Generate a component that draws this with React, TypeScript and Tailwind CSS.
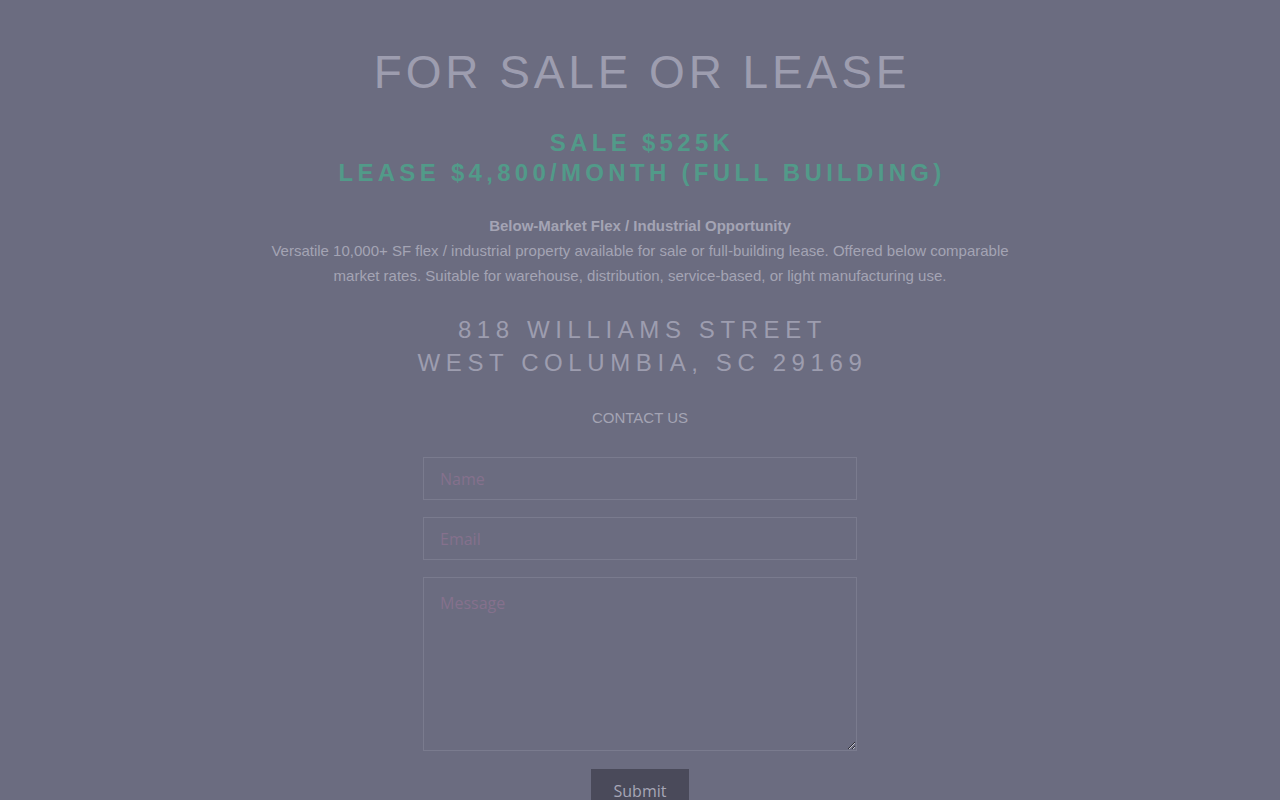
export default function App() {
  return (
    <div className="min-h-[800px] w-full bg-[#6b6c80] flex flex-col items-center pt-[45px] pb-10 font-['Liberation_Sans',Arial,sans-serif]">
      <h1 className="pl-[4px] text-[46px] leading-[55px] tracking-[3.9px] text-[#9d9daf] font-normal">FOR SALE OR LEASE</h1>

      <div className="mt-[28px] pl-[4px] flex flex-col items-center text-[24px] leading-[30px] font-bold tracking-[4.3px] text-[#529a89]">
        <div>SALE $525K</div>
        <div>LEASE $4,800/MONTH (FULL BUILDING)</div>
      </div>

      <div className="mt-[25px] max-w-[760px] text-center text-[15px] leading-[25px] text-[#a4a4b4]">
        <div className="font-bold">Below-Market Flex / Industrial Opportunity</div>
        <p>
          Versatile 10,000+ SF flex / industrial property available for sale or full-building lease. Offered below comparable
          market rates. Suitable for warehouse, distribution, service-based, or light manufacturing use.
        </p>
      </div>

      <div className="mt-[25px] pl-[5px] flex flex-col items-center text-[24px] leading-[33px] tracking-[5.6px] text-[#9d9daf]">
        <div>818 WILLIAMS STREET</div>
        <div>WEST COLUMBIA, SC 29169</div>
      </div>

      <div className="mt-[29px] text-[15px] leading-[20px] text-[#a4a4b4]">CONTACT US</div>

      <form className="mt-[29px] w-[434px] flex flex-col items-center gap-[17px] font-['Open_Sans','Noto_Sans',sans-serif]">
        <input
          type="text"
          placeholder="Name"
          className="w-full h-[43px] border border-[#7a7b8e] bg-transparent px-4 text-[16px] text-[#a4a4b4] placeholder:text-[#85718d] outline-none"
        />
        <input
          type="email"
          placeholder="Email"
          className="w-full h-[43px] border border-[#7a7b8e] bg-transparent px-4 text-[16px] text-[#a4a4b4] placeholder:text-[#85718d] outline-none"
        />
        <textarea
          placeholder="Message"
          className="w-full h-[174px] border border-[#7a7b8e] bg-transparent px-4 py-[13px] text-[16px] text-[#a4a4b4] placeholder:text-[#85718d] outline-none"
        />
        <button
          type="button"
          className="mt-[1px] w-[98px] h-[44px] bg-[#4a4a5a] text-[16px] text-[#a6a6b6]"
        >
          Submit
        </button>
      </form>
    </div>
  );
}
